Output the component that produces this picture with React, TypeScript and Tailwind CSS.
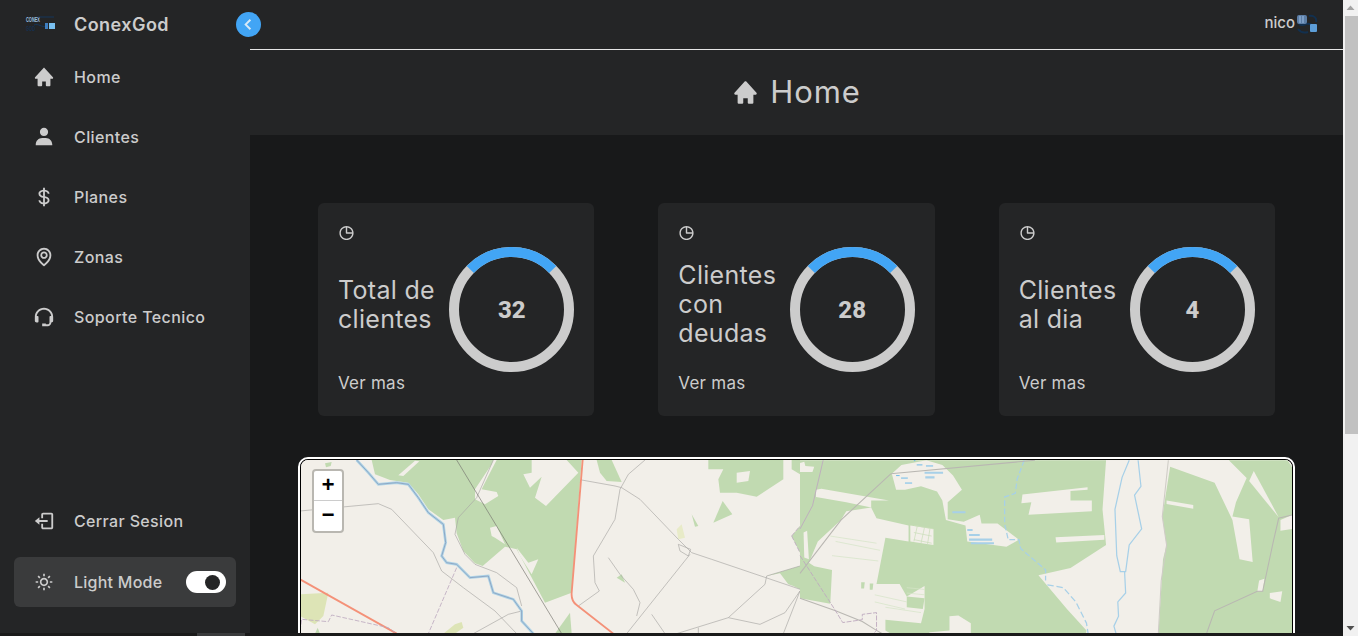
import React from "react";
import {
  BiSolidHome,
  BiSolidUser,
  BiDollar,
  BiMap,
  BiSupport,
  BiLogOut,
  BiSun,
  BiPieChartAlt,
  BiChevronLeft,
} from "react-icons/bi";

const nav = [
  { label: "Home", Icon: BiSolidHome },
  { label: "Clientes", Icon: BiSolidUser },
  { label: "Planes", Icon: BiDollar },
  { label: "Zonas", Icon: BiMap },
  { label: "Soporte Tecnico", Icon: BiSupport },
];

const cards = [
  { title: "Total de clientes", value: "32" },
  { title: "Clientes con deudas", value: "28" },
  { title: "Clientes al dia", value: "4" },
];

function Logo() {
  return (
    <svg width="30" height="20" viewBox="0 0 30 20" className="shrink-0">
      <text x="1" y="7.5" fontSize="8" fontFamily="Liberation Sans, sans-serif" fontWeight="700" fill="#9cc2e2" textLength="14" lengthAdjust="spacingAndGlyphs">CONEX</text>
      <text x="1" y="17" fontSize="7" fontFamily="Liberation Sans, sans-serif" fontWeight="700" fill="#16304f" textLength="9" lengthAdjust="spacingAndGlyphs">GOD</text>
      <path d="M9 11 C14 9 16 14 22 12 M13 3 H29" stroke="#14365a" strokeWidth="1" fill="none" />
      <rect x="20" y="9" width="3" height="6" fill="#3f7fc0" />
      <rect x="24" y="9" width="6" height="6" fill="#79c0f0" />
    </svg>
  );
}

function Avatar() {
  return (
    <svg width="24" height="22" viewBox="0 0 24 22" className="shrink-0 -mt-[2px] blur-[0.4px]">
      <path d="M4 11 C8 15 12 7 18 13 M3 16 C6 20 10 20 13 19 M14 3 C19 2 22 5 21 9" stroke="#12304f" strokeWidth="2" fill="none" />
      <rect x="2" y="2" width="10" height="9" rx="2" fill="#5c7ea6" />
      <path d="M5 3 V10 M8 3 V10" stroke="#87a9cf" strokeWidth="1.5" />
      <rect x="15" y="11" width="7" height="8" rx="1" fill="#5d9ed8" />
    </svg>
  );
}

function Ring({ value }: { value: string }) {
  return (
    <div className="relative w-[125px] h-[125px] shrink-0 flex items-center justify-center">
      <svg width="125" height="125" viewBox="0 0 125 125" className="absolute inset-0">
        <circle cx="62.5" cy="62.5" r="57.5" fill="none" stroke="#cccccc" strokeWidth="10" />
        <path d="M21.3 22.4 A57.5 57.5 0 0 1 103.7 22.4" fill="none" stroke="#42a5f5" strokeWidth="10" />
      </svg>
      <span className="relative text-[24px] leading-none font-extrabold text-[#cccccc] [font-family:Roboto,sans-serif]">{value}</span>
    </div>
  );
}

const riverPoints =
  "170,12 205,50 235,85 290,80 325,85 355,125 385,170 430,205 437,260 425,300 440,320 470,325 510,365 565,360 580,410 640,430 665,465 665,495 700,533";

function MapDrawing() {
  const road = { fill: "none", stroke: "#a9a8a5", strokeWidth: 2 };
  const green = "#c1dab1";
  const land = "#f2efe9";
  return (
    <svg width="992" height="174" viewBox="301 459 992 174" className="block">
      <rect x="301" y="459" width="992" height="174" fill={land} />
      <g transform="translate(300 455) scale(0.33333)">
        <g fill={green}>
          <polygon points="215,12 845,12 815,410 735,440 650,280 615,272 548,330 525,322 490,285 470,232 465,185 430,192 385,160 355,115 325,80 270,72 225,55" />
          <polygon points="765,533 810,470 815,533" />
          <polygon points="890,12 935,12 965,78 920,75 900,50" />
          <polygon points="1225,12 1450,12 1450,70 1370,122 1310,110 1260,110 1255,70 1270,40 1225,40" />
          <polygon points="1240,200 1268,135 1297,175" />
          <polygon points="1175,175 1195,210 1185,212" />
          <polygon points="950,365 975,380 965,355" />
          <polygon points="1475,240 1500,210 1500,290" />
          <polygon points="1400,360 1500,330 1500,400 1480,390 1465,385 1440,352" />
          <polygon points="1475,12 1500,12 1500,55 1475,40" />
          <polygon points="75,22 95,18 92,30 78,34" />
          <polygon points="45,533 53,515 60,533" />
        </g>
        <g fill={land}>
          <polygon points="345,14 295,58 310,60 358,16" />
          <polygon points="555,55 575,25 580,12 590,12 565,60 545,100 590,108 595,120 555,145 525,130 525,100" />
          <polygon points="695,12 800,12 835,50 738,150 705,125 725,62 690,95 670,55 695,50" />
          <polygon points="570,215 590,210 615,265 585,245 575,240" />
          <polygon points="650,275 685,320 715,310 695,355 660,300" />
          <polygon points="1310,50 1350,45 1345,75 1310,80" />
        </g>
        <polygon points="0,415 85,410 70,480 45,505 0,480" fill="#dde4b6" />
        <polygon points="430,533 465,505 485,498 490,515 465,533" fill="#dde4b6" />
        <polygon points="1130,220 1145,205 1155,245 1135,250" fill="#e8ebc8" />
        <g {...road}>
          <polyline points="0,165 235,143 275,160 400,290 425,345 490,395 585,465 650,533" />
          <polyline points="580,12 530,125 475,185 465,235 495,295 525,325 590,350 650,395 665,450" />
          <polyline points="845,72 945,90 965,95 1020,130 1135,250 1175,290 1235,310 1560,420" />
          <polyline points="1035,12 985,55 960,100 945,190 880,300 885,380 898,405 835,450" />
          <polyline points="1170,295 980,533" />
          <polyline points="925,305 960,355 1000,400 1020,440 1010,480" />
          <polyline points="1400,360 1395,385 1285,485 1130,533" />
          <polyline points="1400,360 1500,330" />
          <polyline points="1285,485 1380,505 1455,470 1500,405 1450,533" />
          <polyline points="520,533 625,475 665,465" />
          <polyline points="1135,265 1140,285 1165,300 1172,280 1135,265" />
          <polyline points="1055,475 1095,533" />
          <polyline points="1195,515 1195,533" />
        </g>
        <polyline points={riverPoints} fill="none" stroke="#aed3e6" strokeWidth="8" />
        <polyline points={riverPoints} fill="none" stroke="#8ea8c6" strokeWidth="3" />
        <line x1="470" y1="12" x2="785" y2="533" stroke="#77756f" strokeWidth="2" />
        <path d="M848 12 L815 410 Q813 435 830 447 L940 533" fill="none" stroke="#f49178" strokeWidth="5.5" />
        <line x1="0" y1="370" x2="290" y2="533" stroke="#f49178" strokeWidth="5.5" />
        <g fill="none" stroke="#bda9bf" strokeWidth="2.5" strokeDasharray="14 5">
          <polyline points="470,335 385,533" />
          <polyline points="0,525 5,490 85,497 95,477 265,515 290,533" />
          <polyline points="1475,240 1500,210" />
          <polyline points="1475,240 1500,290" />
        </g>
      </g>
      <g transform="translate(800 455) scale(0.3559)">
        <g fill={green}>
          <polygon points="0,12 860,12 850,150 860,250 760,315 670,335 750,430 805,490 798,533 0,533" />
          <polygon points="1040,30 1165,75 1215,180 1235,290 1272,298 1262,178 1215,170 1225,130 1255,62 1205,12 1370,12 1385,35 1385,533 1005,533 1020,290 1030,250 1018,170" />
        </g>
        <g fill={land}>
          <polygon points="258,50 285,25 355,12 400,25 430,55 455,95 415,130 415,178 460,185 505,165 510,190 555,190 615,235 580,255 470,240 465,195 410,180 400,125 385,100 340,85 295,95 270,95" />
          <polygon points="310,195 375,205 375,250 310,240" />
          <polygon points="45,95 60,92 250,125 200,125 200,145 130,130 45,115" />
          <polygon points="130,155 200,145 215,175 305,195 305,240 240,230 215,360 280,360 300,395 350,365 350,430 340,470 240,460 240,490 310,533 0,533 0,400 85,415 90,320 40,310 25,300 50,240 115,180" />
          <polygon points="10,215 20,210 25,290 12,285" />
          <polygon points="0,20 12,16 15,28 40,30 35,45 0,45" />
          <polygon points="625,108 808,88 808,95 760,98 760,125 820,125 820,155 642,165 650,130 622,133" />
          <polygon points="718,228 855,222 855,235 720,243" />
          <polygon points="365,495 420,490 420,450 445,448 480,470 480,533 310,533" />
          <polygon points="498,510 595,505 605,533 498,533" />
          <polygon points="1275,42 1345,172 1262,70" />
          <polygon points="1030,125 1105,138 1105,148 1030,135" />
          <polygon points="1350,180 1385,165 1385,205 1350,210" />
          <polygon points="1320,385 1355,380 1350,410 1320,400" />
          <polygon points="1290,350 1305,345 1300,380 1285,380" />
          <polygon points="1236,520 1275,525 1275,528 1236,524" />
        </g>
        <g fill={green}>
          <polygon points="300,395 350,400 345,430 300,425" />
          <polygon points="172,355 182,355 180,372 172,372" />
          <polygon points="196,358 206,358 204,376 196,376" />
        </g>
        <g fill="none" stroke="#d5e4c6" strokeWidth="2">
          <path d="M85 225 L215 245 M100 240 L225 265 M90 280 L220 295 M210 390 L300 410 M210 410 L295 430 M240 425 L340 440 M300 370 L350 375 M300 385 L350 390 M450 505 L480 505 M450 520 L480 520" />
          <path d="M320 195 L375 205 M320 215 L370 225 M320 235 L370 245 M330 195 L320 240 M350 200 L340 245 M365 205 L358 250" stroke="#c9ddb9" />
        </g>
        <g fill="none" stroke="#a7d0e8" strokeWidth="3.5">
          <polyline points="925,12 905,60 885,150 890,280 900,325 915,325 925,250 960,205 940,110 958,85 950,12" />
          <polyline points="912,325 915,385 893,410 895,450 882,478 898,533" />
          <polyline points="630,12 610,65 605,105 575,115 575,190 585,235 615,235 620,260 690,320 690,350" strokeDasharray="16 7" />
          <polyline points="695,362 740,370 775,410 805,470 815,533" strokeDasharray="18 8" />
        </g>
        <g stroke="#a7d0e8" strokeWidth="6" fill="none">
          <path d="M350 47 H402 M352 60 H378 M428 158 H465 M470 208 H485 M475 222 H505 M475 235 H540 M480 245 H545" />
        </g>
        <g stroke="#5fb4ea" strokeWidth="2.5" fill="none">
          <path d="M328 25 H344 M354 28 H374 M270 55 H280 M284 62 H303 M295 76 H315 M320 13 H324" />
        </g>
        <g fill="none" stroke="#b9b7b2" strokeWidth="3">
          <polyline points="255,50 660,12" />
          <polyline points="255,50 115,180 0,330" />
          <polyline points="1130,533 1165,435 1285,380 1300,380 1330,240 1345,175 1385,165" />
          <polyline points="0,400 100,435 175,465 215,490 290,533" />
          <polyline points="1035,12 1018,170 1030,250 1015,350 1005,533" stroke="#cfccc6" />
        </g>
        <g fill="none" stroke="#bda9bf" strokeWidth="2.5">
          <polyline points="65,12 35,140 0,205" />
          <polyline points="0,280 100,435 120,468 175,460 175,445 215,440 215,490 190,515 145,522 145,533" strokeDasharray="14 4" />
        </g>
      </g>
    </svg>
  );
}

export default function App() {
  return (
    <div className="relative flex h-[636px] w-[1358px] overflow-hidden bg-[#18191a] text-[#cccccc] [font-family:Inter,sans-serif]">
      <div className="flex min-w-0 flex-1 flex-col">
        <div className="flex min-h-0 flex-1">
          <aside className="relative flex w-[250px] shrink-0 flex-col bg-[#242526] pb-[26px]">
            <div className="flex h-[47px] items-center pl-[25px] gap-[19px]">
              <Logo />
              <span className="mt-[2px] text-[18px] font-semibold tracking-[0.45px]">ConexGod</span>
            </div>
            <nav className="flex flex-col">
              {nav.map(({ label, Icon }) => (
                <div key={label} className="flex h-[60px] items-center">
                  <span className="flex w-[74px] justify-center pl-[14px] pr-0">
                    <span className="flex w-[60px] justify-center"><Icon size={22} /></span>
                  </span>
                  <span className="text-[16px] font-medium tracking-[0.4px]">{label}</span>
                </div>
              ))}
            </nav>
            <div className="mt-auto mb-[6px] flex h-[60px] items-center">
              <span className="flex w-[74px] justify-center pl-[14px]">
                <span className="flex w-[60px] justify-center"><BiLogOut size={22} /></span>
              </span>
              <span className="text-[16px] font-medium tracking-[0.35px]">Cerrar Sesion</span>
            </div>
            <div className="mx-[14px] flex h-[50px] items-center rounded-[6px] bg-[#3a3b3c]">
              <span className="flex w-[60px] justify-center"><BiSun size={20} /></span>
              <span className="text-[16px] font-medium tracking-[0.25px]">Light Mode</span>
              <span className="ml-auto mr-[10px] flex h-[22px] w-[40px] items-center justify-end rounded-full bg-white pr-[6px]">
                <span className="h-[15px] w-[15px] rounded-full bg-[#242526]" />
              </span>
            </div>
            <div className="absolute left-[236px] top-[12px] z-10 flex h-[25px] w-[25px] items-center justify-center rounded-full bg-[#42a5f5] text-[#d8e9f7]">
              <BiChevronLeft size={23} />
            </div>
          </aside>
          <main className="flex min-w-0 flex-1 flex-col overflow-hidden">
            <header className="flex h-[50px] shrink-0 items-center justify-end border-b border-[#e6e6e6] bg-[#242526] pr-[24px]">
              <span className="text-[15px] font-medium -mt-[2px]">nico</span>
              <Avatar />
            </header>
            <div className="flex h-[85px] shrink-0 items-center justify-center gap-[11px] bg-[#242526]">
              <BiSolidHome size={27} />
              <span className="text-[31px] tracking-[0.9px]">Home</span>
            </div>
            <div className="grid shrink-0 grid-cols-3 gap-x-[64px] px-[68px] pt-[68px]">
              {cards.map((c) => (
                <section key={c.title} className="flex h-[213px] flex-col rounded-[6px] bg-[#242526] px-[20px] pt-[20px]">
                  <BiPieChartAlt size={17} className="mt-[1px] h-[18px]" />
                  <div className="mt-[5px] flex items-center justify-between">
                    <h2 className="w-[108px] text-[25px] font-normal leading-[29px] tracking-[0.3px] -mt-[10px]">{c.title}</h2>
                    <Ring value={c.value} />
                  </div>
                  <a className="text-[17px] leading-[24px] -mt-[1px] tracking-[0.25px]">Ver mas</a>
                </section>
              ))}
            </div>
            <div className="relative mx-[48px] mt-[41px] h-[400px] shrink-0 overflow-hidden rounded-[10px] border-2 border-white">
              <div className="h-full overflow-hidden rounded-[8px] border border-black bg-[#f2efe9]">
                <MapDrawing />
              </div>
              <div className="absolute left-[12px] top-[10px] flex w-[32px] flex-col overflow-hidden rounded-[4px] border-2 border-[#b9b7b1] bg-white font-bold text-black [font-family:'Liberation_Mono',monospace]">
                <span className="flex h-[30px] items-center justify-center border-b border-[#cccccc] pt-[3px] text-[22px] leading-none">+</span>
                <span className="flex h-[30px] items-center justify-center pt-[1px] text-[22px] leading-none">−</span>
              </div>
            </div>
          </main>
        </div>
        <div className="flex h-[3px] shrink-0 bg-[#1a1a1a] pl-[197px]">
          <div className="h-full w-[48px] bg-[#3a3b3c]" />
        </div>
      </div>
      <div className="flex w-[15px] shrink-0 flex-col items-end justify-between bg-[#f1f1f1]">
        <div className="flex w-full flex-col items-end">
          <svg width="15" height="16" viewBox="0 0 15 16"><path d="M3.5 10 L7.5 5.5 L11.5 10 Z" fill="#a3a3a3" /></svg>
          <div className="h-[418px] w-[13px] bg-[#c1c1c1]" />
        </div>
        <svg width="15" height="16" viewBox="0 0 15 16"><path d="M3.5 6 L7.5 10.5 L11.5 6 Z" fill="#505050" /></svg>
      </div>
    </div>
  );
}
